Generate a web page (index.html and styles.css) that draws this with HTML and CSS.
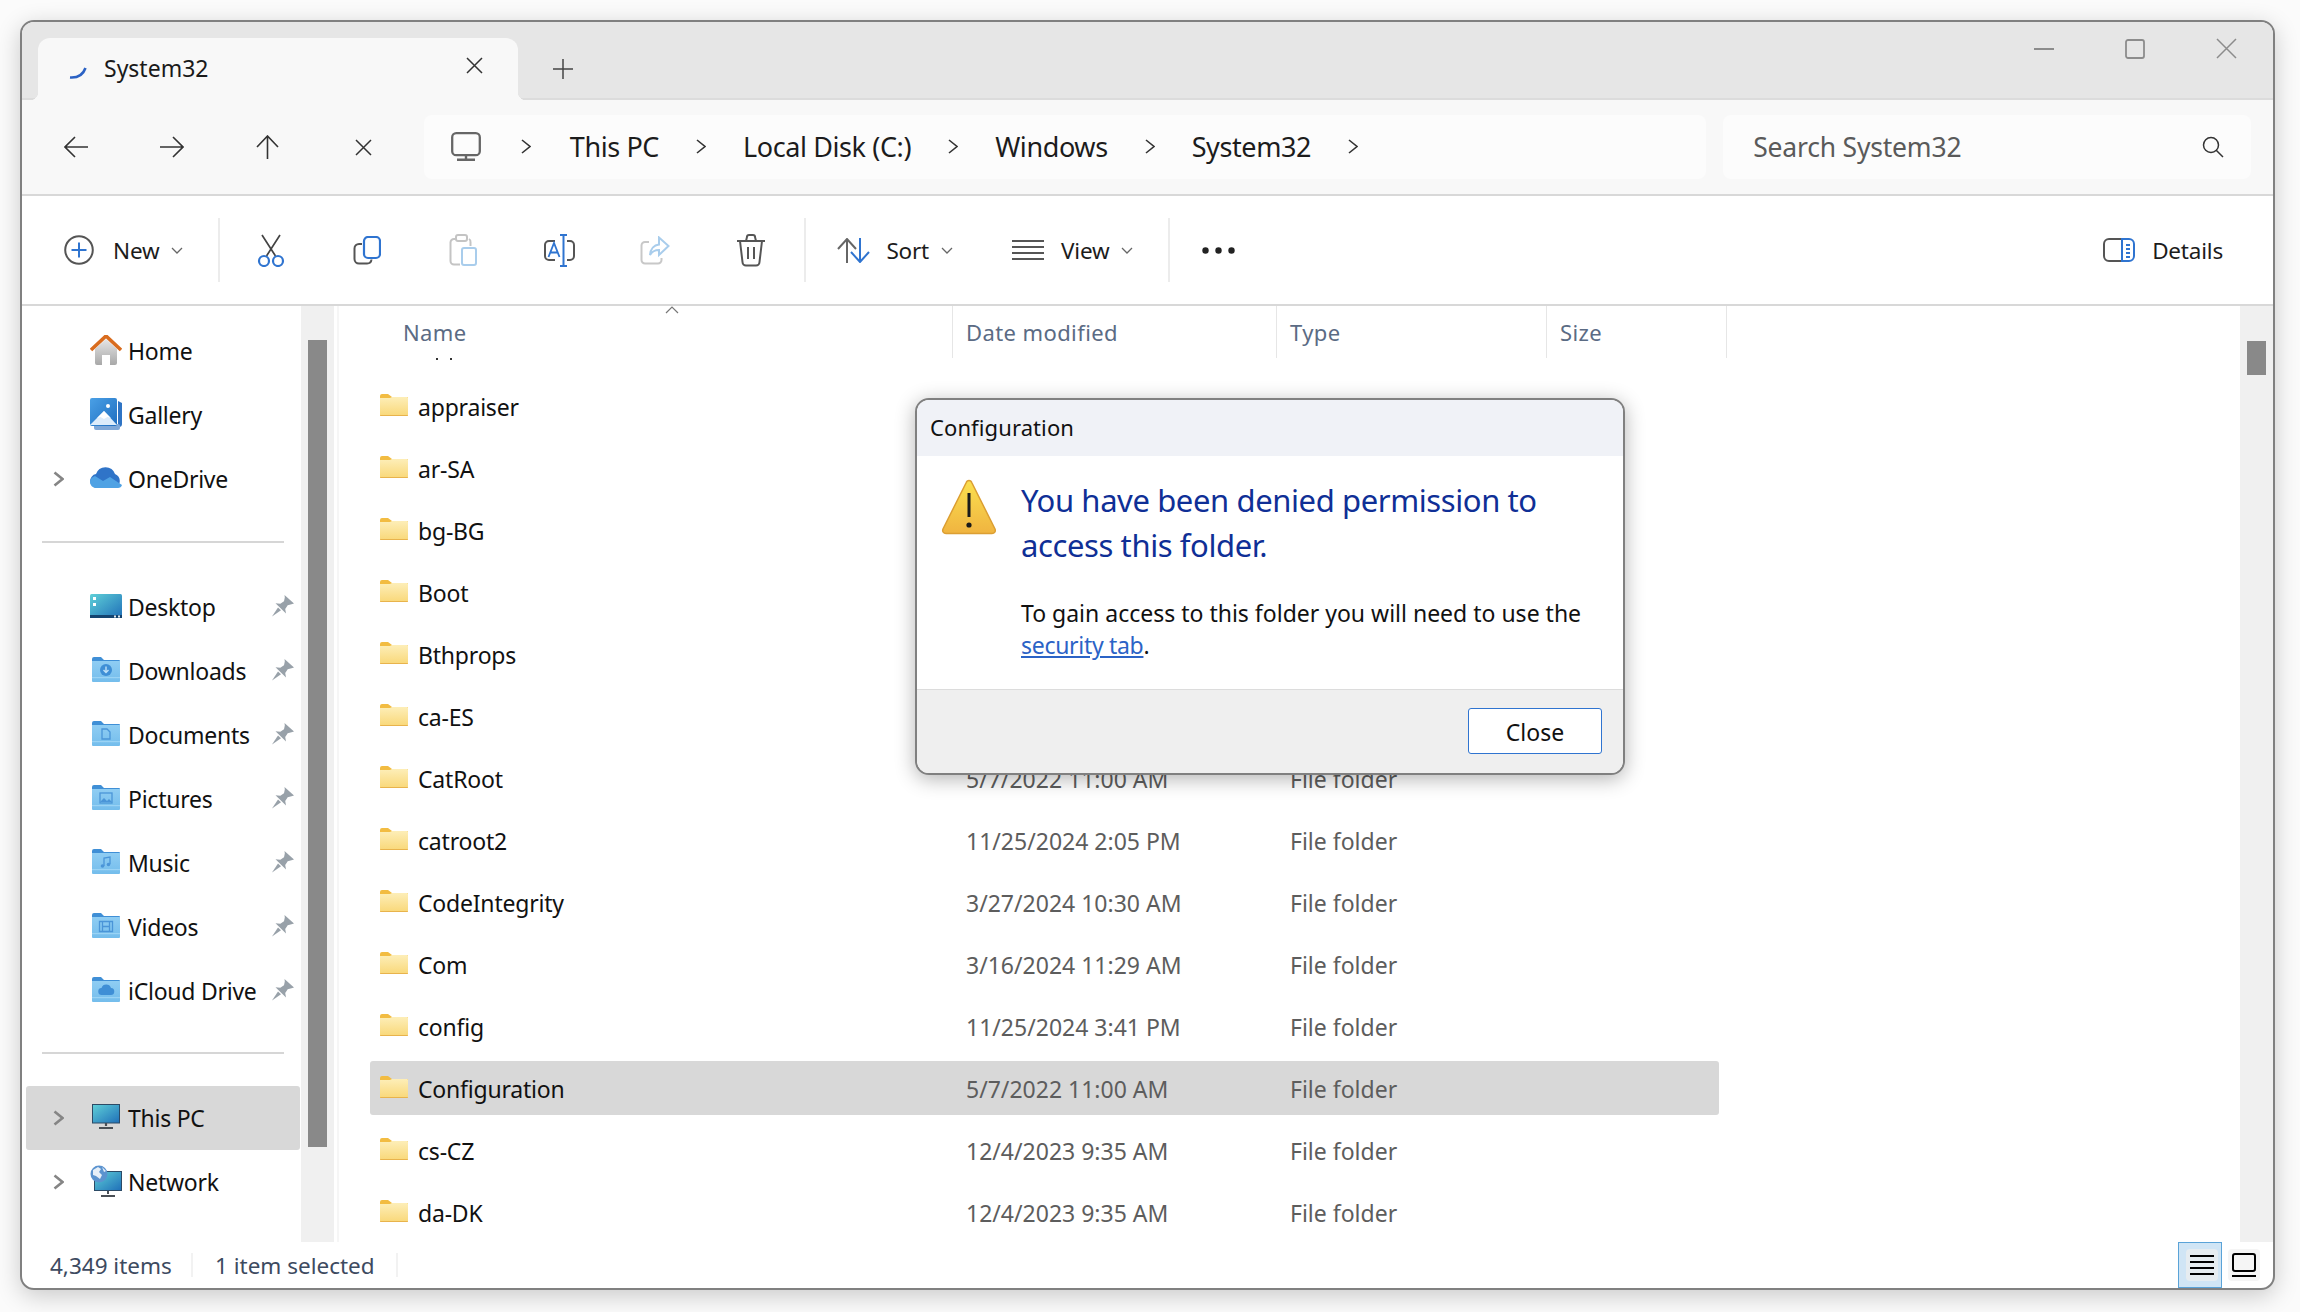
FILE: index.html
```html
<!DOCTYPE html>
<html lang="en">
<head>
  <meta charset="UTF-8">
  <title>System32 - File Explorer</title>
  <link rel="stylesheet" href="styles.css">
</head>
<body>
  <svg class="sprite" xmlns="http://www.w3.org/2000/svg">
    <defs>
      <linearGradient id="folder-body" x1="0" y1="0" x2="0" y2="1"><stop offset="0" stop-color="#fdeeb8"/><stop offset="1" stop-color="#f9d879"/></linearGradient>
      <linearGradient id="lib-body" x1="0" y1="0" x2="0" y2="1"><stop offset="0" stop-color="#8fcdf3"/><stop offset="1" stop-color="#74bdec"/></linearGradient>
      <linearGradient id="screen" x1="0" y1="0" x2="1" y2="1"><stop offset="0" stop-color="#5fd0d8"/><stop offset="1" stop-color="#1f6fb8"/></linearGradient>
      <linearGradient id="warn" x1="0" y1="0" x2="0" y2="1"><stop offset="0" stop-color="#fbe04f"/><stop offset="1" stop-color="#f0b440"/></linearGradient>
      <linearGradient id="home-wall" x1="0" y1="0" x2="0" y2="1"><stop offset="0" stop-color="#e6e6e6"/><stop offset="1" stop-color="#a8a8a8"/></linearGradient>
      <linearGradient id="gallery-sky" x1="0" y1="0" x2="1" y2="1"><stop offset="0" stop-color="#4aa0e6"/><stop offset="1" stop-color="#1f6ec0"/></linearGradient>
      <symbol id="folder" viewBox="0 0 28 22">
        <path d="M0 2a2 2 0 0 1 2-2h6l4 3h16v4H0z" fill="#f2bc42"/>
        <path d="M0 4h10l2-1h15a1 1 0 0 1 1 1v17a1 1 0 0 1-1 1H1a1 1 0 0 1-1-1z" fill="url(#folder-body)"/>
        <path d="M0 21h28v.2a.8.8 0 0 1-.8.8H.8a.8.8 0 0 1-.8-.8z" fill="#e8b34c"/>
      </symbol>
      <symbol id="lib-folder" viewBox="0 0 28 25">
        <path d="M0 2a2 2 0 0 1 2-2h7l3 3h15a1 1 0 0 1 1 1v4H0z" fill="#3f8fd6"/>
        <path d="M0 4h28v20a1 1 0 0 1-1 1H1a1 1 0 0 1-1-1z" fill="url(#lib-body)"/>
        <path d="M0 20h28v1.200H0z" fill="#9ad3f5"/>
      </symbol>
      <symbol id="pin" viewBox="0 0 22 22">
        <path d="M12.500 0L22 8.500l-2.500.8-3.800 1-2.500 3.700.8 4.500L3.500 8.300l4.800.5 3.700-2.600.8-3.700z" fill="#98a1a9"/>
        <path d="M6 12.500L0 21.500l9-6.300z" fill="#98a1a9"/>
      </symbol>
      <symbol id="tree-chevron" viewBox="0 0 11 16">
        <path d="M1.500 1.500l8 6.500-8 6.500" fill="none" stroke="#858585" stroke-width="2.600"/>
      </symbol>
      <symbol id="crumb-chevron" viewBox="0 0 10 15">
        <path d="M1 1l8 6.500-8 6.500" fill="none" stroke="#333" stroke-width="1.600"/>
      </symbol>
      <symbol id="caret" viewBox="0 0 12 7">
        <path d="M1 1l5 5 5-5" fill="none" stroke="#666" stroke-width="1.300"/>
      </symbol>
    </defs>
  </svg>

  <div class="window">
    <div class="tabstrip">
      <div class="tab">
        <svg class="tab-spinner" width="18" height="12" viewBox="0 0 18 12"><path d="M1 10.500C8 11 14 8 16.500 1" fill="none" stroke="#2b62c4" stroke-width="2.600"/></svg>
        <span class="tab-title">System32</span>
        <svg class="tab-close" width="17" height="17" viewBox="0 0 17 17"><path d="M1 1l15 15M16 1L1 16" stroke="#333" stroke-width="1.500"/></svg>
      </div>
      <svg class="tab-new" width="20" height="20" viewBox="0 0 20 20"><path d="M10 0v20M0 10h20" stroke="#444" stroke-width="1.500"/></svg>
      <div class="window-controls">
        <svg width="20" height="2" viewBox="0 0 20 2"><path d="M0 1h20" stroke="#8c8c8c" stroke-width="2"/></svg>
        <svg width="20" height="20" viewBox="0 0 20 20"><rect x="1" y="1" width="18" height="18" rx="2" fill="none" stroke="#8c8c8c" stroke-width="1.800"/></svg>
        <svg width="21" height="21" viewBox="0 0 21 21"><path d="M1 1l19 19M20 1L1 20" stroke="#8c8c8c" stroke-width="1.500"/></svg>
      </div>
    </div>

    <div class="navbar">
      <div class="nav-button"><svg width="24" height="22" viewBox="0 0 24 22"><path d="M24 11H1M11 1L1 11l10 10" fill="none" stroke="#333" stroke-width="1.600"/></svg></div>
      <div class="nav-button"><svg width="24" height="22" viewBox="0 0 24 22"><path d="M0 11h23M13 1l10 10-10 10" fill="none" stroke="#333" stroke-width="1.600"/></svg></div>
      <div class="nav-button"><svg width="23" height="24" viewBox="0 0 23 24"><path d="M11.500 24V1M1 12L11.500 1 22 12" fill="none" stroke="#333" stroke-width="1.600"/></svg></div>
      <div class="nav-button"><svg width="17" height="17" viewBox="0 0 17 17"><path d="M1 1l15 15M16 1L1 16" stroke="#333" stroke-width="1.500"/></svg></div>

      <div class="address">
        <svg width="30" height="29" viewBox="0 0 30 29"><rect x="1.200" y="1.200" width="27.600" height="22" rx="4" fill="none" stroke="#666" stroke-width="2.300"/><path d="M15 23v4M6 27.800h18" stroke="#666" stroke-width="2.400"/></svg>
        <svg class="crumb-first" width="10" height="15"><use href="#crumb-chevron"/></svg>
        <span>This PC</span>
        <svg width="10" height="15"><use href="#crumb-chevron"/></svg>
        <span>Local Disk (C:)</span>
        <svg width="10" height="15"><use href="#crumb-chevron"/></svg>
        <span>Windows</span>
        <svg width="10" height="15"><use href="#crumb-chevron"/></svg>
        <span>System32</span>
        <svg width="10" height="15"><use href="#crumb-chevron"/></svg>
      </div>

      <div class="search">
        <span>Search System32</span>
        <svg width="22" height="22" viewBox="0 0 22 22"><circle cx="9" cy="9" r="7.500" fill="none" stroke="#333" stroke-width="1.500"/><path d="M14 14l7 7" stroke="#333" stroke-width="1.500"/></svg>
      </div>
    </div>

    <div class="toolbar">
      <div class="tool tool-new">
        <svg width="30" height="30" viewBox="0 0 30 30"><circle cx="15" cy="15" r="13.800" fill="none" stroke="#555" stroke-width="2"/><path d="M15 7.500v15M7.500 15h15" stroke="#2f74d0" stroke-width="2"/></svg>
        <span>New</span>
        <svg class="caret" width="12" height="7"><use href="#caret"/></svg>
      </div>
      <div class="tool-sep"></div>
      <div class="tool-icon"><svg width="28" height="33" viewBox="0 0 28 33"><path d="M5 1l13.500 21M23 1L9.500 22" fill="none" stroke="#444" stroke-width="1.700"/><circle cx="7" cy="27" r="5" fill="none" stroke="#2f74d0" stroke-width="2.200"/><circle cx="21" cy="27" r="5" fill="none" stroke="#2f74d0" stroke-width="2.200"/></svg></div>
      <div class="tool-icon"><svg width="28" height="29" viewBox="0 0 28 29"><path d="M9 8H6a4.500 4.500 0 0 0-4.500 4.500V23A4.500 4.500 0 0 0 6 27.500h8a4.500 4.500 0 0 0 4.500-4" fill="none" stroke="#555" stroke-width="2"/><rect x="11" y="1" width="16" height="21" rx="4" fill="none" stroke="#2f74d0" stroke-width="2.200"/></svg></div>
      <div class="tool-icon"><svg width="28" height="32" viewBox="0 0 28 32"><path d="M7 5H5a3.500 3.500 0 0 0-3.500 3.500V27A3.500 3.500 0 0 0 5 30.500h6M21 5h0" fill="none" stroke="#c4c4c4" stroke-width="2"/><path d="M20 5a3 3 0 0 1 1.500 3v4" fill="none" stroke="#c4c4c4" stroke-width="2"/><rect x="7" y="1" width="11" height="6" rx="2" fill="none" stroke="#c4c4c4" stroke-width="2"/><rect x="13" y="14" width="14" height="17" rx="2" fill="none" stroke="#a9cdec" stroke-width="2"/></svg></div>
      <div class="tool-icon"><svg width="33" height="33" viewBox="0 0 33 33"><path d="M12 7H6a4 4 0 0 0-4 4v11a4 4 0 0 0 4 4h6M24 7h3a4 4 0 0 1 4 4v11a4 4 0 0 1-4 4h-3" fill="none" stroke="#555" stroke-width="2"/><path d="M17 1h7M20.500 1v31M17 32h7" fill="none" stroke="#2f74d0" stroke-width="2"/><path d="M5.500 23L11 9l5.500 14M7.500 18.500h7" fill="none" stroke="#2f74d0" stroke-width="1.800"/></svg></div>
      <div class="tool-icon"><svg width="30" height="29" viewBox="0 0 30 29"><path d="M9 6H5a3.500 3.500 0 0 0-3.500 3.500V24A3.500 3.500 0 0 0 5 27.500h13a3.500 3.500 0 0 0 3.500-3.500v-2" fill="none" stroke="#c8c8c8" stroke-width="2"/><path d="M19 1.500l9.500 8.500-9.500 9v-5c-4 0-7 1.500-9 5 .5-6 4-10 9-10.500z" fill="none" stroke="#a9cdec" stroke-width="2"/></svg></div>
      <div class="tool-icon"><svg width="30" height="33" viewBox="0 0 30 33"><path d="M1 7h28M10 7l1-4a2 2 0 0 1 2-2h4a2 2 0 0 1 2 2l1 4M4 7l2.500 21a3.500 3.500 0 0 0 3.500 3.500h10a3.500 3.500 0 0 0 3.500-3.500L26 7M12 13v12M18 13v12" fill="none" stroke="#555" stroke-width="2"/></svg></div>
      <div class="tool-sep tool-sep-sort"></div>
      <div class="tool tool-sort">
        <svg width="33" height="25" viewBox="0 0 33 25"><path d="M10 25V2M1 11l9-10 9 10" fill="none" stroke="#666" stroke-width="2"/><path d="M23 0v23M14 14l9 10 9-10" fill="none" stroke="#2f74d0" stroke-width="2"/></svg>
        <span>Sort</span>
        <svg class="caret" width="12" height="7"><use href="#caret"/></svg>
      </div>
      <div class="tool tool-view">
        <svg width="32" height="20" viewBox="0 0 32 20"><path d="M0 1h32M0 7h32M0 13h32M0 19h32" stroke="#555" stroke-width="2"/></svg>
        <span>View</span>
        <svg class="caret" width="12" height="7"><use href="#caret"/></svg>
      </div>
      <div class="tool-sep tool-sep-more"></div>
      <svg class="tool-more" width="33" height="7" viewBox="0 0 33 7"><circle cx="3.500" cy="3.500" r="3.200" fill="#222"/><circle cx="16.500" cy="3.500" r="3.200" fill="#222"/><circle cx="29.500" cy="3.500" r="3.200" fill="#222"/></svg>
      <div class="tool tool-details">
        <svg width="32" height="24" viewBox="0 0 32 24"><path d="M20 1H6a5 5 0 0 0-5 5v12a5 5 0 0 0 5 5h14" fill="none" stroke="#555" stroke-width="2"/><path d="M19 1h7a5 5 0 0 1 5 5v12a5 5 0 0 1-5 5h-7z" fill="none" stroke="#2f74d0" stroke-width="2"/><path d="M23 7h4M23 11h4M23 15h4M23 19h4" stroke="#2f74d0" stroke-width="2"/></svg>
        <span>Details</span>
      </div>
    </div>

    <div class="content">
      <div class="sidebar">
        <div class="tree-row">
          <span class="tree-arrow"></span>
          <span class="tree-icon"><svg width="32" height="30" viewBox="0 0 32 30"><path d="M5 14L16 4l11 10v14a2 2 0 0 1-2 2h-5V20h-8v10H7a2 2 0 0 1-2-2z" fill="url(#home-wall)"/><path d="M1 15L16 1l15 14" fill="none" stroke="#d96c1e" stroke-width="3.600"/></svg></span>
          <span class="tree-label">Home</span>
        </div>
        <div class="tree-row">
          <span class="tree-arrow"></span>
          <span class="tree-icon"><svg width="32" height="32" viewBox="0 0 32 32"><path d="M5 29h24a3 3 0 0 0 3-3V5l-4-2v24H5z" fill="#2f74c4"/><rect x="4" y="26" width="26" height="6" rx="2" fill="#7fa8d8"/><rect x="0" y="0" width="27" height="28" rx="2" fill="url(#gallery-sky)"/><path d="M0 27L14 13l13 14z" fill="#dcecfb"/><path d="M7 20l7-7 7 7-3.500-1-3.500 2-3.500-2z" fill="#fff"/><circle cx="18" cy="8" r="2" fill="#fff"/></svg></span>
          <span class="tree-label">Gallery</span>
        </div>
        <div class="tree-row">
          <span class="tree-arrow"><svg width="11" height="16"><use href="#tree-chevron"/></svg></span>
          <span class="tree-icon"><svg width="32" height="22" viewBox="0 0 32 22"><path d="M7 21a7 7 0 0 1-1-13.900A10 10 0 0 1 25 7a7.500 7.500 0 0 1 0 14z" fill="#2f74c8"/><path d="M6 21a6 6 0 0 1-6-6c0-3 2-5 5-6l8 5 7-4 12 8c-.5 2-2 3-4 3z" fill="#4fa2e4"/></svg></span>
          <span class="tree-label">OneDrive</span>
        </div>
        <div class="tree-sep"></div>
        <div class="tree-row">
          <span class="tree-arrow"></span>
          <span class="tree-icon"><svg width="32" height="24" viewBox="0 0 32 24"><rect width="32" height="24" rx="1.500" fill="url(#screen)"/><rect y="21" width="32" height="3" fill="#13436f"/><rect x="3" y="3" width="3" height="3" fill="#fff"/><rect x="3" y="9" width="3" height="3" fill="#fff"/><rect x="24" y="21.500" width="2" height="2" fill="#dfe9f2"/><rect x="28" y="21.500" width="2" height="2" fill="#dfe9f2"/></svg></span>
          <span class="tree-label">Desktop</span>
          <svg class="tree-pin" width="22" height="22"><use href="#pin"/></svg>
        </div>
        <div class="tree-row">
          <span class="tree-arrow"></span>
          <span class="tree-icon"><svg width="28" height="25" viewBox="0 0 28 25"><use href="#lib-folder" width="28" height="25"/><circle cx="14" cy="13" r="6" fill="#3f8fd6"/><path d="M14 9.500v6M11.500 13l2.500 2.500 2.500-2.500" fill="none" stroke="#bfe2f8" stroke-width="1.400"/></svg></span>
          <span class="tree-label">Downloads</span>
          <svg class="tree-pin" width="22" height="22"><use href="#pin"/></svg>
        </div>
        <div class="tree-row">
          <span class="tree-arrow"></span>
          <span class="tree-icon"><svg width="28" height="25" viewBox="0 0 28 25"><use href="#lib-folder" width="28" height="25"/><path d="M10 8h5l3 3v7h-8z" fill="none" stroke="#4a95d8" stroke-width="1.300"/></svg></span>
          <span class="tree-label">Documents</span>
          <svg class="tree-pin" width="22" height="22"><use href="#pin"/></svg>
        </div>
        <div class="tree-row">
          <span class="tree-arrow"></span>
          <span class="tree-icon"><svg width="28" height="25" viewBox="0 0 28 25"><use href="#lib-folder" width="28" height="25"/><rect x="8" y="8" width="12" height="10" fill="none" stroke="#4a95d8" stroke-width="1.300"/><path d="M8 17l4-4 3 3 2-2 3 3z" fill="#4a95d8"/></svg></span>
          <span class="tree-label">Pictures</span>
          <svg class="tree-pin" width="22" height="22"><use href="#pin"/></svg>
        </div>
        <div class="tree-row">
          <span class="tree-arrow"></span>
          <span class="tree-icon"><svg width="28" height="25" viewBox="0 0 28 25"><use href="#lib-folder" width="28" height="25"/><path d="M12 17V9l6-1v7" fill="none" stroke="#4a95d8" stroke-width="1.300"/><circle cx="10.500" cy="17" r="1.800" fill="#4a95d8"/><circle cx="16.500" cy="15.500" r="1.800" fill="#4a95d8"/></svg></span>
          <span class="tree-label">Music</span>
          <svg class="tree-pin" width="22" height="22"><use href="#pin"/></svg>
        </div>
        <div class="tree-row">
          <span class="tree-arrow"></span>
          <span class="tree-icon"><svg width="28" height="25" viewBox="0 0 28 25"><use href="#lib-folder" width="28" height="25"/><path d="M7.500 8.500h13v10h-13zM10.500 8.500v10M17.500 8.500v10M10.500 13.500h7" fill="none" stroke="#4a95d8" stroke-width="1.300"/></svg></span>
          <span class="tree-label">Videos</span>
          <svg class="tree-pin" width="22" height="22"><use href="#pin"/></svg>
        </div>
        <div class="tree-row">
          <span class="tree-arrow"></span>
          <span class="tree-icon"><svg width="28" height="25" viewBox="0 0 28 25"><use href="#lib-folder" width="28" height="25"/><path d="M10 18a3.500 3.500 0 0 1-.5-7 5 5 0 0 1 9.500 0 3.500 3.500 0 0 1-.5 7z" fill="#3f8fd6"/></svg></span>
          <span class="tree-label">iCloud Drive</span>
          <svg class="tree-pin" width="22" height="22"><use href="#pin"/></svg>
        </div>
        <div class="tree-sep tree-sep-low"></div>
        <div class="tree-row tree-row-active">
          <span class="tree-arrow"><svg width="11" height="16"><use href="#tree-chevron"/></svg></span>
          <span class="tree-icon"><svg width="28" height="25" viewBox="0 0 28 25"><rect x=".5" y=".5" width="27" height="18.500" fill="url(#screen)" stroke="#2c4a66"/><path d="M14 19v3M7 24h14" stroke="#4a4f55" stroke-width="2.200"/></svg></span>
          <span class="tree-label">This PC</span>
        </div>
        <div class="tree-row">
          <span class="tree-arrow"><svg width="11" height="16"><use href="#tree-chevron"/></svg></span>
          <span class="tree-icon"><svg width="32" height="32" viewBox="0 0 32 32"><rect x="4.500" y="6.500" width="27" height="19" fill="url(#screen)" stroke="#2c4a66"/><path d="M18 26v3M11 31h14" stroke="#4a4f55" stroke-width="2"/><circle cx="9" cy="9" r="8.500" fill="#5b93cf"/><path d="M3 5l5-3 3 2-2 3 3 3-2 4-4-3-3-1zM12 2l4 4-2 1z" fill="#e6eff8"/></svg></span>
          <span class="tree-label">Network</span>
        </div>
      </div>
      <div class="scroll-track scroll-track-nav"><div class="scroll-thumb-nav"></div></div>

      <div class="main">
        <div class="col-header">
          <div class="col-cell col-name">Name
            <svg class="sort-caret" width="14" height="8" viewBox="0 0 14 8"><path d="M1 7l6-6 6 6" fill="none" stroke="#777" stroke-width="1.200"/></svg>
          </div>
          <div class="col-cell col-date">Date modified</div>
          <div class="col-cell col-type">Type</div>
          <div class="col-cell col-size">Size</div>
        </div>
        <div class="parent-row"><span></span><span></span></div>
        <div class="file-list">
          <div class="file-row"><span class="file-name"><svg width="28" height="22"><use href="#folder"/></svg>appraiser</span></div>
          <div class="file-row"><span class="file-name"><svg width="28" height="22"><use href="#folder"/></svg>ar-SA</span></div>
          <div class="file-row"><span class="file-name"><svg width="28" height="22"><use href="#folder"/></svg>bg-BG</span></div>
          <div class="file-row"><span class="file-name"><svg width="28" height="22"><use href="#folder"/></svg>Boot</span></div>
          <div class="file-row"><span class="file-name"><svg width="28" height="22"><use href="#folder"/></svg>Bthprops</span></div>
          <div class="file-row"><span class="file-name"><svg width="28" height="22"><use href="#folder"/></svg>ca-ES</span></div>
          <div class="file-row"><span class="file-name"><svg width="28" height="22"><use href="#folder"/></svg>CatRoot</span><span>5/7/2022 11:00 AM</span><span>File folder</span></div>
          <div class="file-row"><span class="file-name"><svg width="28" height="22"><use href="#folder"/></svg>catroot2</span><span>11/25/2024 2:05 PM</span><span>File folder</span></div>
          <div class="file-row"><span class="file-name"><svg width="28" height="22"><use href="#folder"/></svg>CodeIntegrity</span><span>3/27/2024 10:30 AM</span><span>File folder</span></div>
          <div class="file-row"><span class="file-name"><svg width="28" height="22"><use href="#folder"/></svg>Com</span><span>3/16/2024 11:29 AM</span><span>File folder</span></div>
          <div class="file-row"><span class="file-name"><svg width="28" height="22"><use href="#folder"/></svg>config</span><span>11/25/2024 3:41 PM</span><span>File folder</span></div>
          <div class="file-row file-row-selected"><span class="file-name"><svg width="28" height="22"><use href="#folder"/></svg>Configuration</span><span>5/7/2022 11:00 AM</span><span>File folder</span></div>
          <div class="file-row"><span class="file-name"><svg width="28" height="22"><use href="#folder"/></svg>cs-CZ</span><span>12/4/2023 9:35 AM</span><span>File folder</span></div>
          <div class="file-row"><span class="file-name"><svg width="28" height="22"><use href="#folder"/></svg>da-DK</span><span>12/4/2023 9:35 AM</span><span>File folder</span></div>
        </div>
      </div>
      <div class="scroll-track scroll-track-main"><div class="scroll-thumb-main"></div></div>
    </div>

    <div class="statusbar">
      <span class="status-count">4,349 items</span>
      <span class="status-selected">1 item selected</span>
      <div class="view-switch">
        <div class="view-list"><div class="view-list-inner"><svg width="24" height="20" viewBox="0 0 24 20"><path d="M0 1h24M0 7h24M0 13h24M0 19h24" stroke="#000" stroke-width="2"/></svg></div></div>
        <div class="view-tile"><svg width="24" height="24" viewBox="0 0 24 24"><rect x="1" y="1" width="22" height="17" rx="2" fill="none" stroke="#000" stroke-width="2"/><path d="M0 23h24" stroke="#000" stroke-width="2"/></svg></div>
      </div>
    </div>

    <div class="dialog">
      <div class="dialog-title">Configuration</div>
      <div class="dialog-body">
        <svg class="dialog-icon" width="56" height="56" viewBox="0 0 56 56"><path d="M28 1.500c1.500 0 2.500 1 3 2.500l23 46c1 2.500-.5 4.500-3 4.500H5c-2.500 0-4-2-3-4.500L25 4c.5-1.500 1.500-2.500 3-2.500z" fill="url(#warn)" stroke="#dc9f33" stroke-width="1.500"/><path d="M28 14v24" stroke="#1a1a1a" stroke-width="3"/><circle cx="28" cy="46" r="2.600" fill="#1a1a1a"/></svg>
        <div class="dialog-text">
          <h1 class="dialog-heading">You have been denied permission to access this folder.</h1>
          <p class="dialog-message">To gain access to this folder you will need to use the <a class="dialog-link" href="#">security tab</a>.</p>
        </div>
      </div>
      <div class="dialog-footer"><button class="dialog-close">Close</button></div>
    </div>
  </div>
</body>
</html>
```

FILE: styles.css
```css
* {
  box-sizing: border-box;
}

body {
  margin: 0;
  height: 1312px;
  padding: 20px 25px 22px 20px;
  background-color: #fbfbfb;
  font-family: "Noto Sans", "Open Sans", sans-serif;
  color: #111;
  overflow: hidden;
}

svg {
  display: block;
  flex: none;
}

.sprite {
  width: 0;
  height: 0;
}

.window {
  position: relative;
  height: 1270px;
  display: flex;
  flex-direction: column;
  border: 2px solid #808080;
  border-radius: 14px;
  background-color: #fff;
  box-shadow: 0 6px 24px rgba(0, 0, 0, 0.2);
  overflow: hidden;
}

/* tabs and title bar */
.tabstrip {
  height: 78px;
  flex: none;
  display: flex;
  align-items: flex-end;
  padding-left: 16px;
  background-color: #e6e6e6;
  border-bottom: 2px solid #dcdcdc;
}

.tab {
  position: relative;
  width: 480px;
  height: 62px;
  margin-bottom: -2px;
  display: flex;
  align-items: center;
  padding: 0 35px 6px 31px;
  background-color: #f8f8f8;
  border-radius: 12px 12px 0 0;
}

.tab::before,
.tab::after {
  content: "";
  position: absolute;
  bottom: 0;
  width: 8px;
  height: 8px;
}

.tab::before {
  left: -8px;
  background: radial-gradient(circle at 0 0, transparent 8px, #f8f8f8 8.5px);
}

.tab::after {
  right: -8px;
  background: radial-gradient(circle at 100% 0, transparent 8px, #f8f8f8 8.5px);
}

.tab-spinner {
  margin-top: 14px;
}

.tab-title {
  margin-left: 17px;
  margin-top: 4px;
  font-size: 23px;
  color: #1a1a1a;
}

.tab-close {
  margin-left: auto;
  margin-top: -2px;
}

.tab-new {
  margin: 0 0 19px 35px;
}

.window-controls {
  margin-left: auto;
  height: 21px;
  margin-bottom: 39px;
  margin-right: 36px;
  display: flex;
  align-items: center;
  gap: 71px;
}

/* navigation row */
.navbar {
  height: 96px;
  flex: none;
  display: flex;
  align-items: center;
  padding-left: 6px;
  padding-right: 22px;
  background-color: #f8f8f8;
  border-bottom: 2px solid #d8d8d8;
}

.nav-button {
  width: 96px;
  display: flex;
  justify-content: center;
}

.address {
  width: 1283px;
  height: 64px;
  margin-left: 12px;
  display: flex;
  align-items: center;
  gap: 37px;
  padding-left: 27px;
  padding-bottom: 2px;
  background-color: #fcfcfc;
  border-radius: 8px;
  font-size: 27px;
  letter-spacing: -0.4px;
  color: #1c1c1c;
}

.crumb-first {
  margin-left: 3px;
  margin-right: 2px;
}

.search {
  width: 528px;
  height: 64px;
  margin-left: 17px;
  display: flex;
  align-items: center;
  justify-content: space-between;
  padding: 0 27px 0 30px;
  background-color: #fcfcfc;
  border-radius: 8px;
  font-size: 26.500px;
  letter-spacing: -0.2px;
  color: #5a5a5a;
}

/* command bar */
.toolbar {
  height: 110px;
  flex: none;
  display: flex;
  align-items: center;
  padding-left: 42px;
  padding-right: 50px;
  background-color: #fff;
  border-bottom: 2px solid #d8d8d8;
  font-size: 22.500px;
  letter-spacing: -0.2px;
  color: #1c1c1c;
}

.tool {
  display: flex;
  align-items: center;
}

.tool-new span {
  margin-left: 19px;
}

.tool-new .caret,
.tool-sort .caret,
.tool-view .caret {
  margin-left: 12px;
}

.tool-sep {
  width: 2px;
  height: 64px;
  margin-left: 35px;
  margin-right: 3px;
  background-color: #ececec;
}

.tool-icon {
  width: 96px;
  display: flex;
  justify-content: center;
}

.tool-sep-sort {
  margin-left: 5px;
  margin-right: 31px;
}

.tool-sort span {
  margin-left: 16px;
}

.tool-view {
  margin-left: 59px;
}

.tool-view span {
  margin-left: 17px;
}

.tool-sep-more {
  margin-left: 35px;
  margin-right: 32px;
}

.tool-details {
  margin-left: auto;
}

.tool-details span {
  margin-left: 17px;
}

/* sidebar and file list */
.content {
  flex: 1;
  min-height: 0;
  display: flex;
}

.sidebar {
  width: 279px;
  flex: none;
  padding: 13px 1px 0 4px;
  font-size: 23px;
  letter-spacing: -0.25px;
  color: #111;
}

.tree-row {
  height: 64px;
  display: flex;
  align-items: center;
  border-radius: 3px;
}

.tree-row-active {
  background-color: #d8d8d8;
}

.tree-arrow {
  width: 64px;
  display: flex;
  padding-left: 27px;
}

.tree-icon {
  width: 32px;
  display: flex;
  justify-content: center;
  margin-top: -3px;
}

.tree-label {
  margin-left: 6px;
}

.tree-pin {
  margin-left: auto;
  margin-right: 6px;
  margin-top: -3px;
}

.tree-sep {
  height: 2px;
  margin: 30px 16px 32px 16px;
  background-color: #d6d6d6;
}

.tree-sep-low {
  margin-top: 29px;
  margin-bottom: 32px;
}

.scroll-track {
  width: 33px;
  flex: none;
  background-color: #f0f0f0;
}

.scroll-track-nav {
  padding: 34px 7px 0;
}

.scroll-thumb-nav {
  height: 807px;
  background-color: #898989;
}

.scroll-track-main {
  padding: 35px 7px 0;
}

.scroll-thumb-main {
  height: 34px;
  background-color: #898989;
}

.main {
  flex: 1;
  min-width: 0;
  border-left: 2px solid #f6f6f6;
  margin-left: 3px;
}

.col-header {
  height: 52px;
  display: flex;
  font-size: 22px;
  letter-spacing: 0.4px;
  color: #5b6b84;
}

.col-cell {
  position: relative;
  height: 52px;
  line-height: 52px;
  padding-left: 13px;
  border-right: 1px solid #e6e6e6;
}

.col-name {
  width: 614px;
  padding-left: 64px;
}

.col-date {
  width: 324px;
}

.col-type {
  width: 270px;
}

.col-size {
  width: 180px;
}

.sort-caret {
  position: absolute;
  left: 326px;
  top: 0;
}

.parent-row {
  height: 21px;
  display: flex;
  gap: 12px;
  padding-left: 97px;
}

.parent-row span {
  width: 2px;
  height: 2px;
  background-color: #333;
}

.file-list {
  display: flex;
  flex-direction: column;
  gap: 8px;
  margin-left: 31px;
  width: 1349px;
}

.file-row {
  height: 54px;
  display: grid;
  grid-template-columns: 586px 324px 1fr;
  align-items: center;
  padding-left: 10px;
  padding-top: 2px;
  border-radius: 3px;
  font-size: 23px;
  color: #5d5d5d;
}

.file-row-selected {
  background-color: #d8d8d8;
}

.file-name {
  display: flex;
  align-items: center;
  gap: 10px;
  font-size: 23px;
  letter-spacing: -0.2px;
  color: #111;
}

.file-name svg {
  margin-top: -4px;
}

/* status bar */
.statusbar {
  flex: none;
  height: 46px;
  display: flex;
  align-items: center;
  padding-left: 28px;
  font-size: 22.500px;
  color: #3d4a5f;
}

.status-count {
  width: 143px;
  height: 24px;
  line-height: 26px;
  border-right: 2px solid #f2f2f2;
}

.status-selected {
  width: 205px;
  height: 24px;
  line-height: 26px;
  padding-left: 22px;
  border-right: 2px solid #f2f2f2;
}

.view-switch {
  margin-left: auto;
  display: flex;
  align-items: flex-start;
  height: 100%;
  margin-right: 13px;
}

.view-list {
  width: 44px;
  height: 100%;
  display: flex;
  align-items: center;
  justify-content: flex-end;
  padding-right: 3px;
  background-color: #d0e5f5;
  border: 1px solid #5aa3d8;
}

.view-list-inner {
  width: 32px;
  height: 32px;
  display: flex;
  align-items: center;
  justify-content: center;
  background-color: #e6ecf0;
  border-radius: 4px;
}

.view-tile {
  width: 32px;
  height: 32px;
  margin-left: 6px;
  margin-top: 7px;
  display: flex;
  align-items: center;
  justify-content: center;
  background-color: #f5f5f5;
  border-radius: 4px;
}

/* permission dialog */
.dialog {
  position: absolute;
  left: 893px;
  top: 376px;
  width: 710px;
  height: 377px;
  display: flex;
  flex-direction: column;
  background-color: #fff;
  border: 2px solid #808080;
  border-radius: 14px;
  box-shadow: 0 4px 20px rgba(0, 0, 0, 0.3);
  overflow: hidden;
}

.dialog-title {
  height: 56px;
  flex: none;
  display: flex;
  align-items: center;
  padding-left: 13px;
  padding-bottom: 2px;
  background-color: #f0f2f7;
  font-size: 22px;
  letter-spacing: 0.1px;
  color: #111;
}

.dialog-body {
  height: 234px;
  flex: none;
  display: flex;
  padding: 22px 20px 0 24px;
  border-bottom: 1px solid #dcdcdc;
}

.dialog-icon {
  margin-right: 24px;
  margin-top: 1px;
}

.dialog-heading {
  margin: 0;
  font-size: 31px;
  font-weight: 400;
  line-height: 45px;
  color: #0f2f96;
  letter-spacing: -0.4px;
}

.dialog-message {
  margin: 29px 0 0;
  font-size: 23px;
  line-height: 32px;
  color: #111;
}

.dialog-link {
  color: #2b63c6;
  letter-spacing: -0.3px;
}

.dialog-footer {
  flex: 1;
  display: flex;
  justify-content: flex-end;
  padding: 18px 21px 0 0;
  background-color: #efefef;
}

.dialog-close {
  width: 134px;
  height: 46px;
  padding-top: 3px;
  background-color: #fff;
  border: 1.500px solid #2f74d0;
  border-radius: 3px;
  font-family: "Noto Sans", "Open Sans", sans-serif;
  font-size: 23px;
  color: #111;
}
```
